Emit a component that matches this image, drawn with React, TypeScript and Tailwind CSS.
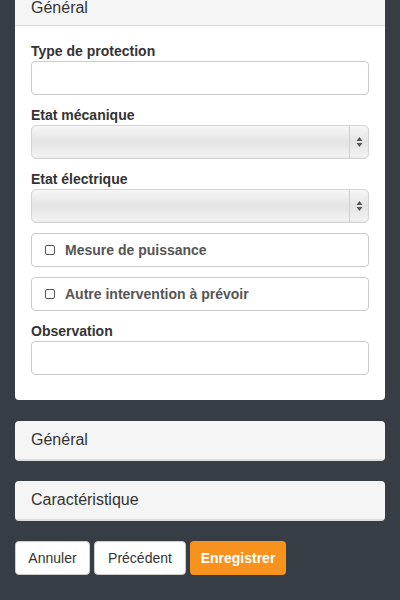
import React from "react";

const Label = ({ children }: { children: React.ReactNode }) => (
  <div className="text-[14px] leading-[20px] font-bold text-[#333]">{children}</div>
);

const Input = () => (
  <div className="h-[34px] rounded-[4px] border border-[#ccc] bg-white" />
);

const Select = () => (
  <div className="flex h-[34px] rounded-[5px] border border-[#d4d4d4] bg-gradient-to-b from-[#f6f6f6] via-[#e4e4e4] to-[#f3f3f3] shadow-[inset_0_-1px_0_rgba(0,0,0,0.04)]">
    <div className="flex-1" />
    <div className="flex w-[19px] items-center justify-center border-l border-[#d0d0d0]">
      <svg width="7" height="12" viewBox="0 0 7 12">
        <path d="M3.5 1 L6.5 5 L0.5 5 Z" fill="#555" />
        <path d="M3.5 11 L6.5 7 L0.5 7 Z" fill="#555" />
      </svg>
    </div>
  </div>
);

const Check = ({ children }: { children: React.ReactNode }) => (
  <div className="flex h-[34px] items-center rounded-[4px] border border-[#ccc] bg-white pl-[13px]">
    <span className="h-[10px] w-[10px] rounded-[2px] border border-[#555] bg-white" />
    <span className="ml-[10px] text-[14px] font-bold text-[#555]">{children}</span>
  </div>
);

const Heading = ({ children }: { children: React.ReactNode }) => (
  <div className="rounded-[4px] border-b-2 border-[#ddd] bg-[#f5f5f5] px-[16px] text-[16px] leading-[38px] text-[#333]">
    {children}
  </div>
);

export default function App() {
  return (
    <div
      className="min-h-[600px] overflow-hidden bg-[#363d45] px-[15px]"
      style={{ fontFamily: '"Liberation Sans", Arial, sans-serif' }}
    >
      {/* open panel */}
      <div className="-mt-[10px] overflow-hidden rounded-[4px] bg-white">
        <div className="border-b border-[#ddd] bg-[#f5f5f5] px-[16px] pt-[9px] pb-[9px] text-[16px] leading-[17px] text-[#333]">
          Général
        </div>
        <div className="flex flex-col gap-[10px] px-[16px] pt-[15px] pb-[25px]">
          <div>
            <Label>Type de protection</Label>
            <Input />
          </div>
          <div>
            <Label>Etat mécanique</Label>
            <Select />
          </div>
          <div>
            <Label>Etat électrique</Label>
            <Select />
          </div>
          <Check>Mesure de puissance</Check>
          <Check>Autre intervention à prévoir</Check>
          <div>
            <Label>Observation</Label>
            <Input />
          </div>
        </div>
      </div>

      <div className="mt-[21px] flex flex-col gap-[20px]">
        <Heading>Général</Heading>
        <Heading>Caractéristique</Heading>
      </div>

      <div className="mt-[20px] flex gap-[4px] text-[14px]">
        <button className="h-[34px] w-[75px] rounded-[4px] border border-[#ccc] bg-white text-[#333]">
          Annuler
        </button>
        <button className="h-[34px] w-[92px] rounded-[4px] border border-[#ccc] bg-white text-[#333]">
          Précédent
        </button>
        <button className="h-[34px] w-[96px] rounded-[4px] bg-[#f7921e] font-bold text-white">
          Enregistrer
        </button>
      </div>
    </div>
  );
}
